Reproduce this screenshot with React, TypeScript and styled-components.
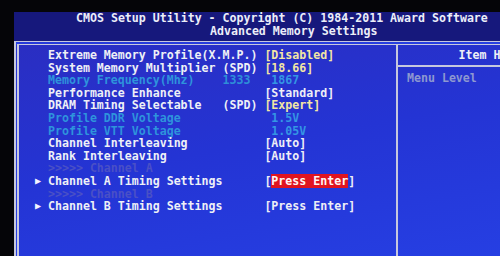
import React from 'react'
import styled, { createGlobalStyle } from 'styled-components'

const GlobalStyle = createGlobalStyle`
  html, body {
    margin: 0;
    padding: 0;
    background: #000;
  }
`

const Screen = styled.div`
  width: 500px;
  height: 256px;
  overflow: hidden;
  background: #050508;
  padding: 12px 0 0 14px;
  box-sizing: border-box;
  display: flex;
  flex-direction: column;
  font-family: 'DejaVu Sans Mono', 'Liberation Mono', monospace;
  font-size: 11.6px;
  font-weight: bold;
  color: #eef0f6;
`

const Header = styled.div`
  background: #16187c;
  height: 29px;
  flex: none;
  display: flex;
  flex-direction: column;
  box-sizing: border-box;
  width: 600px;
`

const HeaderLine = styled.div<{ $indent: number }>`
  line-height: 12.5px;
  padding-left: ${(p) => p.$indent}px;
  white-space: pre;
  color: #eceef8;
`

const Panel = styled.div`
  flex: 1;
  display: grid;
  grid-template-columns: 377px 186px;
  width: 570px;
  border-top: 4px double #c6c8de;
  border-left: 5px double #c6c8de;
  background: linear-gradient(170deg, #2a2ec2 0%, #2434d4 45%, #2640e4 100%);
`

const MainColumn = styled.div`
  padding: 4px 0 0 17px;
  display: flex;
  flex-direction: column;
`

const Row = styled.div`
  display: grid;
  grid-template-columns: 12px 25ch 6ch auto;
  line-height: 12.6px;
  height: 12.6px;
  white-space: pre;
`

const Arrow = styled.span`
  font-size: 10px;
  line-height: 12.6px;
  color: #f4f4ff;
  margin-left: -1px;
`

const Label = styled.span<{ $tone: 'normal' | 'dim' | 'faint'; $wide?: boolean }>`
  grid-column: ${(p) => (p.$wide ? '2 / 4' : 'auto')};
  color: ${(p) =>
    p.$tone === 'dim' ? '#2e94dc' : p.$tone === 'faint' ? '#4a50c6' : '#eef0f6'};
`

const Mid = styled.span<{ $dim?: boolean }>`
  color: ${(p) => (p.$dim ? '#2e8ed8' : '#eef0f6')};
`

const Value = styled.span<{ $tone: 'yellow' | 'white' | 'dim' }>`
  color: ${(p) =>
    p.$tone === 'yellow' ? '#f2e6a4' : p.$tone === 'dim' ? '#3496e4' : '#eeeef6'};
  padding-left: ${(p) => (p.$tone === 'dim' ? '1ch' : '0')};
`

const Selected = styled.span`
  background: #e01420;
  color: #fff4f4;
`

const HelpColumn = styled.div`
  border-left: 2px solid #c6c8de;
  display: flex;
  flex-direction: column;
`

const HelpTitle = styled.div`
  height: 22px;
  line-height: 20px;
  text-align: center;
  border-bottom: 2px solid #c6c8de;
  box-sizing: border-box;
  color: #eef0f6;
`

const HelpText = styled.div`
  padding: 5px 0 0 9px;
  line-height: 12.6px;
  white-space: pre;
  color: #8e98d0;
`

type Item = {
  label: string
  tone?: 'normal' | 'dim' | 'faint'
  mid?: string
  value?: React.ReactNode
  valueTone?: 'yellow' | 'white' | 'dim'
  arrow?: boolean
}

const items: Item[] = [
  { label: 'Extreme Memory Profile(X.M.P.)', value: '[Disabled]', valueTone: 'yellow' },
  { label: 'System Memory Multiplier', mid: '(SPD)', value: '[18.66]', valueTone: 'yellow' },
  { label: 'Memory Frequency(Mhz)', tone: 'dim', mid: '1333', value: '1867', valueTone: 'dim' },
  { label: 'Performance Enhance', value: '[Standard]', valueTone: 'white' },
  { label: 'DRAM Timing Selectable', mid: '(SPD)', value: '[Expert]', valueTone: 'yellow' },
  { label: 'Profile DDR Voltage', tone: 'dim', value: '1.5V', valueTone: 'dim' },
  { label: 'Profile VTT Voltage', tone: 'dim', value: '1.05V', valueTone: 'dim' },
  { label: 'Channel Interleaving', value: '[Auto]', valueTone: 'white' },
  { label: 'Rank Interleaving', value: '[Auto]', valueTone: 'white' },
  { label: '>>>>> Channel A', tone: 'faint' },
  {
    label: 'Channel A Timing Settings',
    arrow: true,
    value: (
      <>
        [<Selected>Press Enter</Selected>]
      </>
    ),
    valueTone: 'white',
  },
  { label: '>>>>> Channel B', tone: 'faint' },
  { label: 'Channel B Timing Settings', arrow: true, value: '[Press Enter]', valueTone: 'white' },
]

export default function App() {
  return (
    <>
      <GlobalStyle />
      <Screen>
        <Header>
          <HeaderLine $indent={62}>
            CMOS Setup Utility - Copyright (C) 1984-2011 Award Software
          </HeaderLine>
          <HeaderLine $indent={196}>Advanced Memory Settings</HeaderLine>
        </Header>
        <Panel>
          <MainColumn>
            {items.map((it) => (
              <Row key={it.label}>
                <Arrow>{it.arrow ? '▶' : ''}</Arrow>
                <Label $tone={it.tone ?? 'normal'} $wide={!it.mid}>
                  {it.label}
                </Label>
                {it.mid && <Mid $dim={it.tone === 'dim'}>{it.mid}</Mid>}
                {it.value && <Value $tone={it.valueTone ?? 'white'}>{it.value}</Value>}
              </Row>
            ))}
          </MainColumn>
          <HelpColumn>
            <HelpTitle>Item Help</HelpTitle>
            <HelpText>Menu Level</HelpText>
          </HelpColumn>
        </Panel>
      </Screen>
    </>
  )
}
